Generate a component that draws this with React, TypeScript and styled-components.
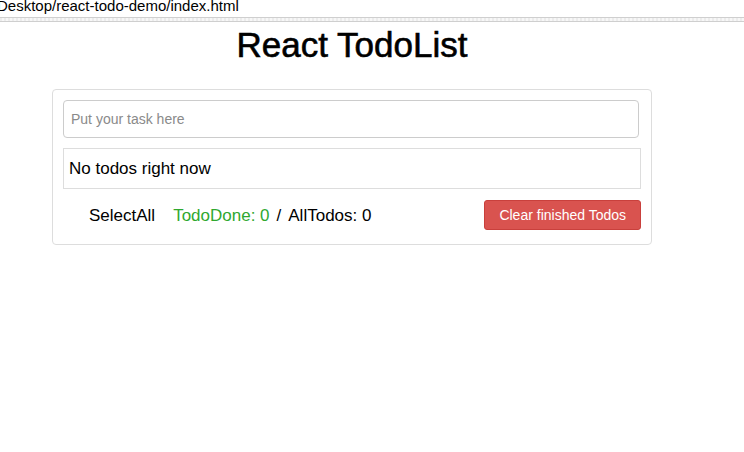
import React from "react";
import styled, { createGlobalStyle } from "styled-components";

const GlobalStyle = createGlobalStyle`
  html, body {
    margin: 0;
    padding: 0;
    background: #fff;
    font-family: "Liberation Sans", Arial, sans-serif;
    color: #000;
    overflow: hidden;
  }
`;

const AddressBar = styled.div`
  height: 17px;
  overflow: hidden;
  font-size: 15px;
  line-height: 15px;
  white-space: nowrap;
`;

const AddressText = styled.div`
  margin: -2px 0 0 -3px;
`;

const Separator = styled.div`
  height: 3px;
  border-top: 1px solid #cfcfcf;
  border-bottom: 1px solid #cfcfcf;
  background: repeating-linear-gradient(90deg, #ececec 0 2px, #f7f7f7 2px 4px);
`;

const Page = styled.div`
  width: 704px;
`;

const Title = styled.h1`
  margin: 3px 0 0;
  text-align: center;
  font-size: 35px;
  line-height: 40px;
  font-weight: normal;
  -webkit-text-stroke: 0.6px #000;
`;

const Panel = styled.div`
  box-sizing: border-box;
  width: 600px;
  margin: 24px 0 0 52px;
  padding: 10px 10px 14px;
  border: 1px solid #ddd;
  border-radius: 4px;
`;

const TaskInput = styled.input`
  display: block;
  box-sizing: border-box;
  width: calc(100% - 2px);
  height: 38px;
  padding: 0 7px;
  border: 1px solid #ccc;
  border-radius: 4px;
  font-family: inherit;
  font-size: 14px;
  color: #555;
  outline: none;

  &::placeholder {
    color: #8a8a8a;
  }
`;

const TodoBox = styled.div`
  box-sizing: border-box;
  height: 41px;
  margin-top: 10px;
  padding: 0 5px;
  border: 1px solid #ddd;
  font-size: 17px;
  line-height: 40px;
`;

const Footer = styled.div`
  display: flex;
  align-items: center;
  margin-top: 11px;
  padding-left: 26px;
  font-size: 17px;
  line-height: 20px;
`;

const Label = styled.span`
  padding-top: 2px;
  margin-right: 18px;
`;

const Count = styled.span<{ $done?: boolean }>`
  padding-top: 2px;
  color: ${(p) => (p.$done ? "#2fa82f" : "#000")};
`;

const Slash = styled.span`
  padding-top: 2px;
  margin: 0 7px;
`;

const ClearButton = styled.button`
  margin-left: auto;
  height: 30px;
  padding: 0 14px;
  border: 1px solid #c9403c;
  border-radius: 3px;
  background: #d9534f;
  color: #fff;
  font-family: inherit;
  font-size: 14px;
  cursor: pointer;
`;

export default function App() {
  return (
    <>
      <GlobalStyle />
      <AddressBar>
        <AddressText>Desktop/react-todo-demo/index.html</AddressText>
      </AddressBar>
      <Separator />
      <Page>
        <Title>React TodoList</Title>
        <Panel>
          <TaskInput placeholder="Put your task here" />
          <TodoBox>No todos right now</TodoBox>
          <Footer>
            <Label>SelectAll</Label>
            <Count $done>TodoDone: 0</Count>
            <Slash>/</Slash>
            <Count>AllTodos: 0</Count>
            <ClearButton>Clear finished Todos</ClearButton>
          </Footer>
        </Panel>
      </Page>
    </>
  );
}
